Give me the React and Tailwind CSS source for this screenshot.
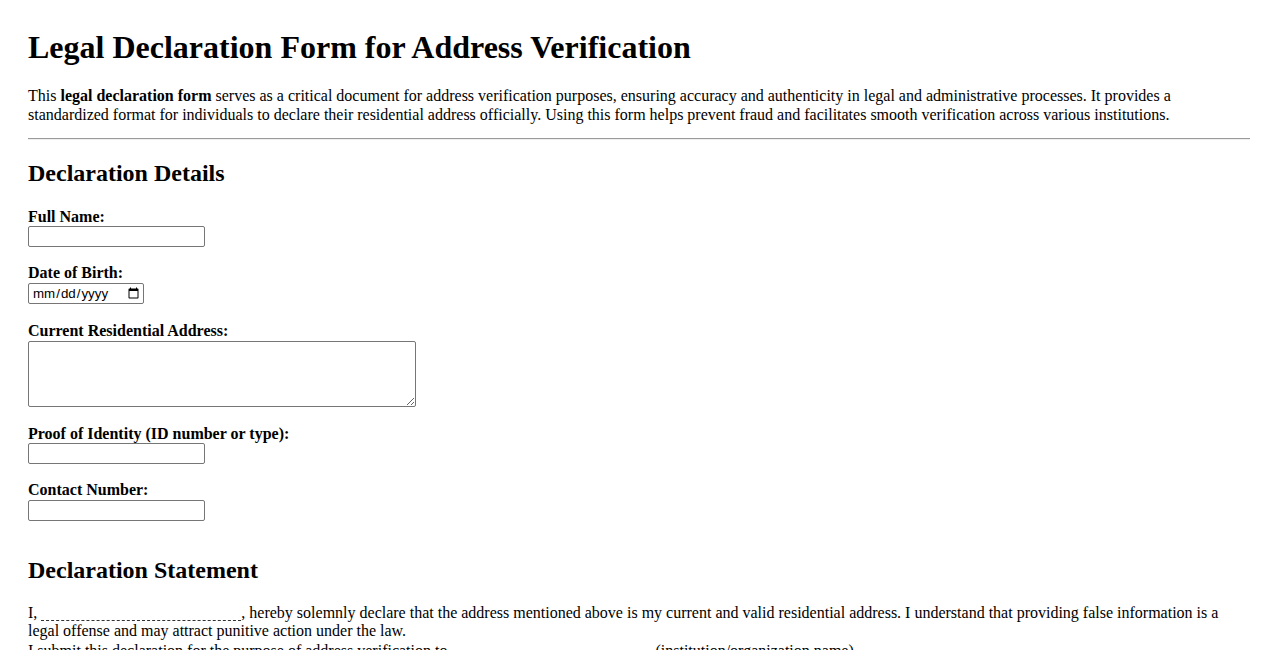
import React from "react";

const serif = "font-['Liberation_Serif','Times_New_Roman',serif]";

const Field = ({ label, gap = "mb-[17px]", children }) => (
  <div className={gap}>
    <label className="block font-bold text-[16px] leading-[18.4px]">{label}</label>
    {children}
  </div>
);

const inputCls =
  "block w-[177px] h-[21px] border border-[#767676] rounded-[2px] bg-white px-[2px] text-[13.33px] font-['Liberation_Sans',Arial,sans-serif]";

const Blank = () => (
  <span className="inline-block w-[200px] h-[18px] border-b border-dashed border-[#333] align-[-3px]"></span>
);

const App = () => {
  return (
    <div className={`${serif} text-black bg-white min-h-[650px] px-[28px] pt-[29px] pb-[40px] text-[16px] leading-[18.4px]`}>
      <h1 className="text-[32px] leading-[37px] font-bold mb-[21.44px]">
        Legal Declaration Form for Address Verification
      </h1>
      <p className="mb-[14px]">
        This <strong>legal declaration form</strong> serves as a critical document for address
        verification purposes, ensuring accuracy and authenticity in legal and administrative
        processes. It provides a standardized format for individuals to declare their residential
        address officially. Using this form helps prevent fraud and facilitates smooth verification
        across various institutions.
      </p>
      <hr className="border-0 border-t border-t-[#9a9a9a] border-b border-b-[#eeeeee] h-0" />

      <h2 className="text-[24px] leading-[27.6px] font-bold mt-[19.92px] mb-[19.92px]">
        Declaration Details
      </h2>

      <Field label="Full Name:">
        <input type="text" className={inputCls} />
      </Field>
      <Field label="Date of Birth:" gap="mb-[18px]">
        <input
          type="date"
          className="block w-[116px] h-[21px] mt-[1px] border border-[#767676] rounded-[2px] bg-white pl-[3px] pr-[1px] text-[13.33px] font-['Liberation_Sans',Arial,sans-serif]"
        />
      </Field>
      <Field label="Current Residential Address:" gap="mb-[18px]">
        <textarea className="block w-[388px] h-[66px] border border-[#767676] rounded-[2px] bg-white p-[2px] text-[13.33px] font-['Liberation_Mono',monospace] resize" />
      </Field>
      <Field label="Proof of Identity (ID number or type):" gap="mb-[17px]">
        <input type="text" className={inputCls} />
      </Field>
      <Field label="Contact Number:">
        <input type="text" className={inputCls} />
      </Field>

      <h2 className="text-[24px] leading-[27.6px] font-bold mt-[36px] mb-[18.5px]">
        Declaration Statement
      </h2>
      <p className="mb-[16px]">
        I, <Blank />, hereby solemnly declare that the address mentioned above is my current and
        valid residential address. I understand that providing false information is a legal offense
        and may attract punitive action under the law.
        <br />
        I submit this declaration for the purpose of address verification to <Blank />{" "}
        (institution/organization name).
      </p>
    </div>
  );
};

export default App;
